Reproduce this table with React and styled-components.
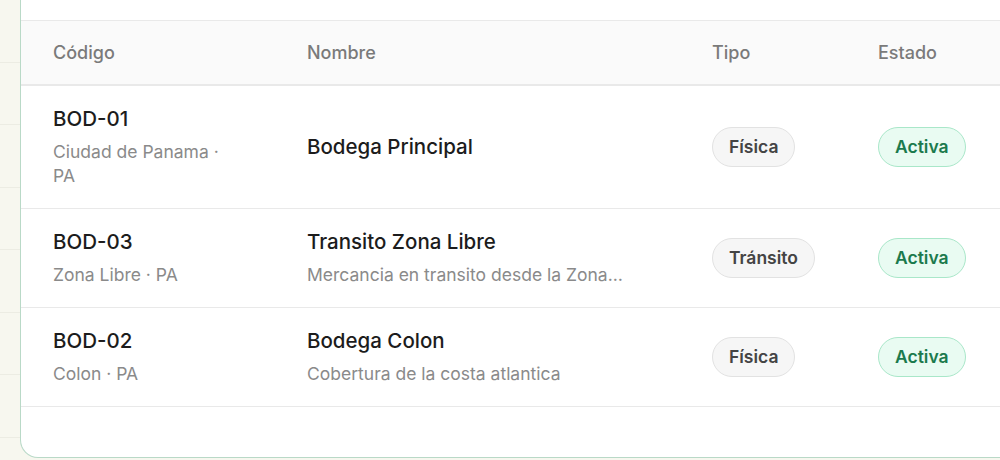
import React from "react";
import styled, { createGlobalStyle } from "styled-components";

const Global = createGlobalStyle`
  html, body { margin: 0; padding: 0; }
  body {
    width: 1000px;
    height: 460px;
    overflow: hidden;
    background: #f7f7ef;
    font-family: Inter, "Noto Sans", sans-serif;
  }
`;

const Page = styled.div`
  display: flex;
  height: 460px;
  width: 1000px;
  overflow: hidden;
`;

const Backdrop = styled.div`
  width: 20px;
  flex: none;
  display: flex;
  flex-direction: column;
`;

const BackdropRow = styled.div`
  height: 62.5px;
  flex: none;
  box-sizing: border-box;
  border-bottom: 1px solid #ecece3;
`;

const Card = styled.div`
  flex: none;
  width: 1040px;
  height: 458px;
  box-sizing: border-box;
  background: #fff;
  border: 1px solid #b9d9c7;
  border-top: none;
  border-radius: 0 0 18px 18px;
  display: flex;
  flex-direction: column;
`;

const TopSpace = styled.div`
  height: 20px;
  flex: none;
`;

const Row = styled.div`
  display: grid;
  grid-template-columns: 254px 405px 166px 1fr;
  align-items: center;
  border-top: 1px solid #e9e9e9;
  ${(p) => p.$last && "border-bottom: 1px solid #e9e9e9;"}
`;

const HeadRow = styled(Row)`
  height: 63px;
  background: #fafafa;
  border-bottom: 1px solid #e9e9e9;
`;

const HeadCell = styled.div`
  padding: 0 32px;
  font-size: 18px;
  font-weight: 500;
  color: #7a7a7a;
`;

const Cell = styled.div`
  padding: 20px 32px;
  min-width: 0;
`;

const Title = styled.div`
  font-size: 20.5px;
  line-height: 26px;
  font-weight: 500;
  color: #1c1c1c;
`;

const Sub = styled.div`
  margin-top: 8px;
  font-size: 17.5px;
  line-height: 24px;
  color: #8a8a8a;
  max-width: ${(p) => p.$max || "none"};
  ${(p) =>
    p.$clip &&
    "white-space: nowrap; overflow: hidden; text-overflow: ellipsis;"}
`;

const Pill = styled.span`
  display: inline-block;
  padding: 8px 16px;
  font-size: 17.5px;
  line-height: 22px;
  font-weight: 600;
  border-radius: 999px;
  border: 1px solid ${(p) => (p.$tone === "ok" ? "#a9e7c9" : "#e2e2e2")};
  background: ${(p) => (p.$tone === "ok" ? "#e9fbf2" : "#f6f6f6")};
  color: ${(p) => (p.$tone === "ok" ? "#1b7a4d" : "#444")};
`;

const rows = [
  {
    code: "BOD-01",
    place: "Ciudad de Panama · PA",
    name: "Bodega Principal",
    desc: "",
    type: "Física",
  },
  {
    code: "BOD-03",
    place: "Zona Libre · PA",
    name: "Transito Zona Libre",
    desc: "Mercancia en transito desde la Zona Libre de Colon",
    type: "Tránsito",
  },
  {
    code: "BOD-02",
    place: "Colon · PA",
    name: "Bodega Colon",
    desc: "Cobertura de la costa atlantica",
    type: "Física",
  },
];

export default function App() {
  return (
    <>
      <Global />
      <Page>
        <Backdrop>
          {Array.from({ length: 8 }).map((_, i) => (
            <BackdropRow key={i} />
          ))}
        </Backdrop>
        <Card>
          <TopSpace />
          <HeadRow>
            <HeadCell>Código</HeadCell>
            <HeadCell>Nombre</HeadCell>
            <HeadCell>Tipo</HeadCell>
            <HeadCell>Estado</HeadCell>
          </HeadRow>
          {rows.map((r, i) => (
            <Row key={r.code} $last={i === rows.length - 1}>
              <Cell>
                <Title>{r.code}</Title>
                <Sub $max="180px">{r.place}</Sub>
              </Cell>
              <Cell>
                <Title>{r.name}</Title>
                {r.desc && (
                  <Sub $clip $max="316px">
                    {r.desc}
                  </Sub>
                )}
              </Cell>
              <Cell>
                <Pill>{r.type}</Pill>
              </Cell>
              <Cell>
                <Pill $tone="ok">Activa</Pill>
              </Cell>
            </Row>
          ))}
        </Card>
      </Page>
    </>
  );
}
